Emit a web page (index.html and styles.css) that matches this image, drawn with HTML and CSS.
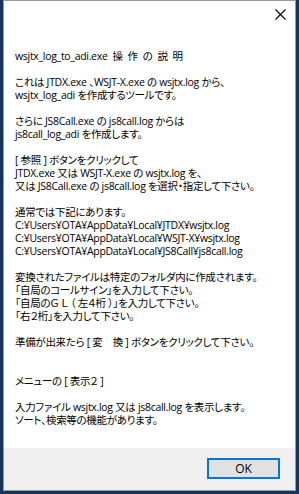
FILE: index.html
```html
<html>
	<head>
		<meta charset="utf-8">
		<link rel="stylesheet" href="styles.css">
	</head>
	<body>
		<div id='dialog'>
			<div id='titleBar'>
				<span class='closeButton'>
					<svg width="11" height="11" viewBox="0 0 11 11"><path d="M0.5 0.5 L10.5 10.5 M10.5 0.5 L0.5 10.5" stroke="#000" stroke-width="1.1" fill="none"/></svg>
				</span>
			</div>

			<div id='messageSection'>
				<p class='heading'>wsjtx_log_to_adi.exe 操 作 の 説 明</p>
				<p>これは JTDX.exe 、WSJT-X.exe の wsjtx.log から、<br/>wsjtx_log_adi を作成するツールです。</p>
				<p>さらに JS8Call.exe の js8call.log からは<br/>js8call_log_adi を作成します。</p>
				<p>[ 参照 ] ボタンをクリックして<br/>JTDX.exe 又は WSJT-X.exe の wsjtx.log を、<br/>又は JS8Call.exe の js8call.log を選択・指定して下さい。</p>
				<p>通常では下記にあります。<br/>C:¥Users¥OTA¥AppData¥Local¥JTDX¥wsjtx.log<br/>C:¥Users¥OTA¥AppData¥Local¥WSJT-X¥wsjtx.log<br/>C:¥Users¥OTA¥AppData¥Local¥JS8Call¥js8call.log</p>
				<p>変換されたファイルは特定のフォルダ内に作成されます。<br/>「自局のコールサイン」を入力して下さい。<br/>「自局のＧ Ｌ （ 左４桁 ）」を入力して下さい。<br/>「右２桁」を入力して下さい。</p>
				<p class='gap'>準備が出来たら [ 変　換 ] ボタンをクリックして下さい。</p>
				<p>メニューの [ 表示２ ]</p>
				<p>入力ファイル wsjtx.log 又は js8call.log を表示します。<br/>ソート、検索等の機能があります。</p>
			</div>

			<div id='footerSection'>
				<span class='okButton'>OK</span>
			</div>
		</div>
	</body>
</html>
```

FILE: styles.css
```css
body {
	margin: 0;
	width: 299px;
	height: 494px;
	overflow: hidden;
	background: #16355a;
	font-family: "Open Sans", "Noto Sans CJK JP", sans-serif;
}

div#dialog {
	margin-left: 3px;
	width: 291px;
	height: 489px;
	border: 1px solid #9a9a9a;
	background: #ffffff;
	display: flex;
	flex-direction: column;
}

div#titleBar {
	height: 29px;
	display: flex;
	justify-content: flex-end;
}

span.closeButton {
	margin: 8px 9px 0 0;
	height: 11px;
}

div#messageSection {
	flex: 1;
	padding: 20px 0 0 11px;
	font-size: 10.5px;
	line-height: 13px;
	color: #000000;
	letter-spacing: -0.3px;
	font-feature-settings: "palt";
}

div#messageSection > p {
	margin: 0 0 13px 0;
	white-space: nowrap;
}

div#messageSection > p.heading {
	word-spacing: 2.5px;
}

div#messageSection > p.gap {
	margin-bottom: 26px;
}

div#footerSection {
	height: 42px;
	background: #f0f0f0;
	display: flex;
	justify-content: flex-end;
	align-items: flex-start;
}

span.okButton {
	margin: 10px 15px 0 0;
	box-sizing: border-box;
	width: 73px;
	height: 21px;
	border: 2px solid #0078d7;
	background: #e1e1e1;
	font-size: 12px;
	line-height: 17px;
	text-align: center;
	color: #000000;
}
```
